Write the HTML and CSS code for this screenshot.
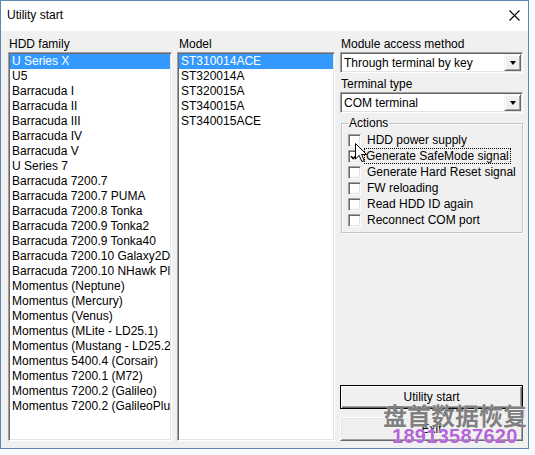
FILE: index.html
```html
<!DOCTYPE html>
<html>
<head>
<meta charset="utf-8">
<title>Utility start</title>
<link rel="stylesheet" href="styles.css">
</head>
<body>
<div class="window">
  <div class="titlebar">
    <span class="title">Utility start</span>
    <svg class="close" width="11" height="11" viewBox="0 0 11 11"><path d="M0.5 0.5 L10.5 10.5 M10.5 0.5 L0.5 10.5" stroke="#000" stroke-width="1.1" fill="none"/></svg>
  </div>
  <div class="client">
    <div class="col col-family">
      <div class="label">HDD family</div>
      <ul class="listbox">
        <li class="selected">U Series X</li>
        <li>U5</li>
        <li>Barracuda I</li>
        <li>Barracuda II</li>
        <li>Barracuda III</li>
        <li>Barracuda IV</li>
        <li>Barracuda V</li>
        <li>U Series 7</li>
        <li>Barracuda 7200.7</li>
        <li>Barracuda 7200.7 PUMA</li>
        <li>Barracuda 7200.8 Tonka</li>
        <li>Barracuda 7200.9 Tonka2</li>
        <li>Barracuda 7200.9 Tonka40</li>
        <li>Barracuda 7200.10 Galaxy2D</li>
        <li>Barracuda 7200.10 NHawk Plus</li>
        <li>Momentus (Neptune)</li>
        <li>Momentus (Mercury)</li>
        <li>Momentus (Venus)</li>
        <li>Momentus (MLite - LD25.1)</li>
        <li>Momentus (Mustang - LD25.2)</li>
        <li>Momentus 5400.4 (Corsair)</li>
        <li>Momentus 7200.1 (M72)</li>
        <li>Momentus 7200.2 (Galileo)</li>
        <li>Momentus 7200.2 (GalileoPlus)</li>
      </ul>
    </div>
    <div class="col col-model">
      <div class="label label-model">Model</div>
      <ul class="listbox">
        <li class="selected">ST310014ACE</li>
        <li>ST320014A</li>
        <li>ST320015A</li>
        <li>ST340015A</li>
        <li>ST340015ACE</li>
      </ul>
    </div>
    <div class="col col-right">
      <div class="label">Module access method</div>
      <div class="combo">
        <span class="combo-text">Through terminal by key</span>
        <span class="combo-btn"><span class="arrow"></span></span>
      </div>
      <div class="label label-gap">Terminal type</div>
      <div class="combo">
        <span class="combo-text">COM terminal</span>
        <span class="combo-btn"><span class="arrow"></span></span>
      </div>
      <fieldset class="group">
        <legend>Actions</legend>
        <div class="check"><span class="box"></span><span>HDD power supply</span></div>
        <div class="check"><span class="box checked"><svg width="9" height="9" viewBox="0 0 9 9"><path d="M1 4.2 L3.3 6.5 L8 1.8" stroke="#000" stroke-width="1.6" fill="none"/></svg></span><span class="focus">Generate SafeMode signal</span></div>
        <div class="check"><span class="box"></span><span>Generate Hard Reset signal</span></div>
        <div class="check"><span class="box"></span><span>FW reloading</span></div>
        <div class="check"><span class="box"></span><span>Read HDD ID again</span></div>
        <div class="check"><span class="box"></span><span>Reconnect COM port</span></div>
      </fieldset>
      <div class="buttons">
        <button class="btn btn-default">Utility start</button>
        <button class="btn">Exit</button>
      </div>
    </div>
  </div>
  <svg class="cursor" width="13" height="20" viewBox="0 0 13 20"><path d="M0.5 0.5 L0.5 16 L4.2 12.4 L6.8 18.6 L9.2 17.6 L6.6 11.5 L11.6 11.5 Z" fill="#fff" stroke="#000" stroke-width="1" stroke-linejoin="miter"/></svg>
  <div class="watermark">
    <div class="wm-cn">盘首数据恢复</div>
    <div class="wm-num">18913587620</div>
  </div>
</div>
</body>
</html>
```
FILE: styles.css
```css
html, body {
  margin: 0;
  padding: 0;
}
body {
  width: 535px;
  height: 455px;
  background: #f7fafc;
  font-family: "Liberation Sans", Arial, sans-serif;
  font-size: 12px;
  color: #000;
  overflow: hidden;
}
.window {
  position: relative;
  width: 527px;
  height: 447px;
  border: 1px solid #5d87b0;
  background: #f0f0f0;
}
.titlebar {
  height: 30px;
  box-sizing: border-box;
  background: #fff;
  display: flex;
  align-items: center;
  justify-content: space-between;
  padding: 0 8px 2px 6px;
}
.title {
  font-size: 12px;
}
.close {
  display: block;
}
.client {
  display: flex;
  gap: 5px;
  height: 417px;
  box-sizing: border-box;
  padding: 6px 0 7px 7px;
}
.col {
  display: flex;
  flex-direction: column;
}
.col-family { width: 164px; }
.col-model { width: 158px; }
.col-right { width: 183px; }
.label {
  height: 15px;
  line-height: 15px;
  padding-left: 1px;
  white-space: nowrap;
}
.label-model { padding-left: 2px; }
.label-gap { margin-top: 4px; }
.listbox {
  flex: 1;
  list-style: none;
  margin: 0;
  padding: 1px;
  background: #fff;
  border: 1px solid;
  border-color: #a0a0a0 #fff #fff #a0a0a0;
  box-shadow: inset 1px 1px 0 #696969, inset -1px -1px 0 #e3e3e3;
  overflow: hidden;
}
.listbox li {
  height: 15px;
  line-height: 15px;
  padding: 0 2px;
  white-space: nowrap;
  overflow: hidden;
}
.listbox li.selected {
  background: #3399ff;
  color: #fff;
}
.combo {
  height: 21px;
  box-sizing: border-box;
  display: flex;
  align-items: center;
  background: #fff;
  border: 1px solid;
  border-color: #a0a0a0 #fff #fff #a0a0a0;
  box-shadow: inset 1px 1px 0 #696969, inset -1px -1px 0 #e3e3e3;
  padding: 1px 1px 1px 3px;
}
.combo-text {
  flex: 1;
  white-space: nowrap;
}
.combo-btn {
  width: 17px;
  height: 17px;
  box-sizing: border-box;
  background: #f0f0f0;
  border: 1px solid;
  border-color: #f0f0f0 #696969 #696969 #f0f0f0;
  box-shadow: inset 1px 1px 0 #fff, inset -1px -1px 0 #a0a0a0;
  display: flex;
  align-items: center;
  justify-content: center;
}
.arrow {
  width: 0;
  height: 0;
  border-left: 3.5px solid transparent;
  border-right: 3.5px solid transparent;
  border-top: 4px solid #000;
}
.group {
  margin: 3px 0 0 1px;
  padding: 2px 0 4px 6px;
  border: 1px solid #c4c4c4;
  box-shadow: inset 1px 1px 0 #fff, 1px 1px 0 #fff;
  min-inline-size: 0;
}
.group legend {
  padding: 0 1px;
  line-height: 14px;
  font-size: 12px;
}
.check {
  display: flex;
  align-items: center;
  height: 16px;
  gap: 6px;
  white-space: nowrap;
}
.box {
  width: 13px;
  height: 13px;
  box-sizing: border-box;
  background: #fff;
  border: 1px solid;
  border-color: #a0a0a0 #fff #fff #a0a0a0;
  box-shadow: inset 1px 1px 0 #696969, inset -1px -1px 0 #e3e3e3;
  display: flex;
  align-items: center;
  justify-content: center;
}
.focus {
  outline: 1px dotted #000;
  outline-offset: 0;
  padding: 0 1px;
  margin-left: -2px;
  line-height: 14px;
}
.buttons {
  margin-top: auto;
  display: flex;
  flex-direction: column;
  gap: 8px;
}
.btn {
  height: 24px;
  width: 183px;
  padding: 0;
  font-family: inherit;
  font-size: 12px;
  color: #000;
  background: #f0f0f0;
  border: 1px solid;
  border-color: #fff #696969 #696969 #fff;
  box-shadow: inset 1px 1px 0 #e3e3e3, inset -1px -1px 0 #a0a0a0;
}
.btn-default {
  border: 1px solid #000;
  box-shadow: inset 1px 1px 0 #fff, inset -1px -1px 0 #696969, inset -2px -2px 0 #a0a0a0;
}
.cursor {
  position: absolute;
  left: 354px;
  top: 142px;
}
.watermark {
  position: absolute;
  left: 382px;
  top: 401px;
  pointer-events: none;
}
.wm-cn {
  font-family: "Noto Sans CJK SC", sans-serif;
  font-weight: 700;
  font-size: 24px;
  line-height: 26px;
  color: rgba(105, 105, 105, 0.85);
  text-shadow: 0 0 1px #fff;
  white-space: nowrap;
}
.wm-num {
  margin: -2px 0 0 9px;
  font-family: "Liberation Sans", Arial, sans-serif;
  font-weight: 700;
  font-size: 20px;
  line-height: 20px;
  color: rgba(170, 80, 210, 0.9);
  text-shadow: 0 0 1px #fff;
  letter-spacing: 0.3px;
}
```
